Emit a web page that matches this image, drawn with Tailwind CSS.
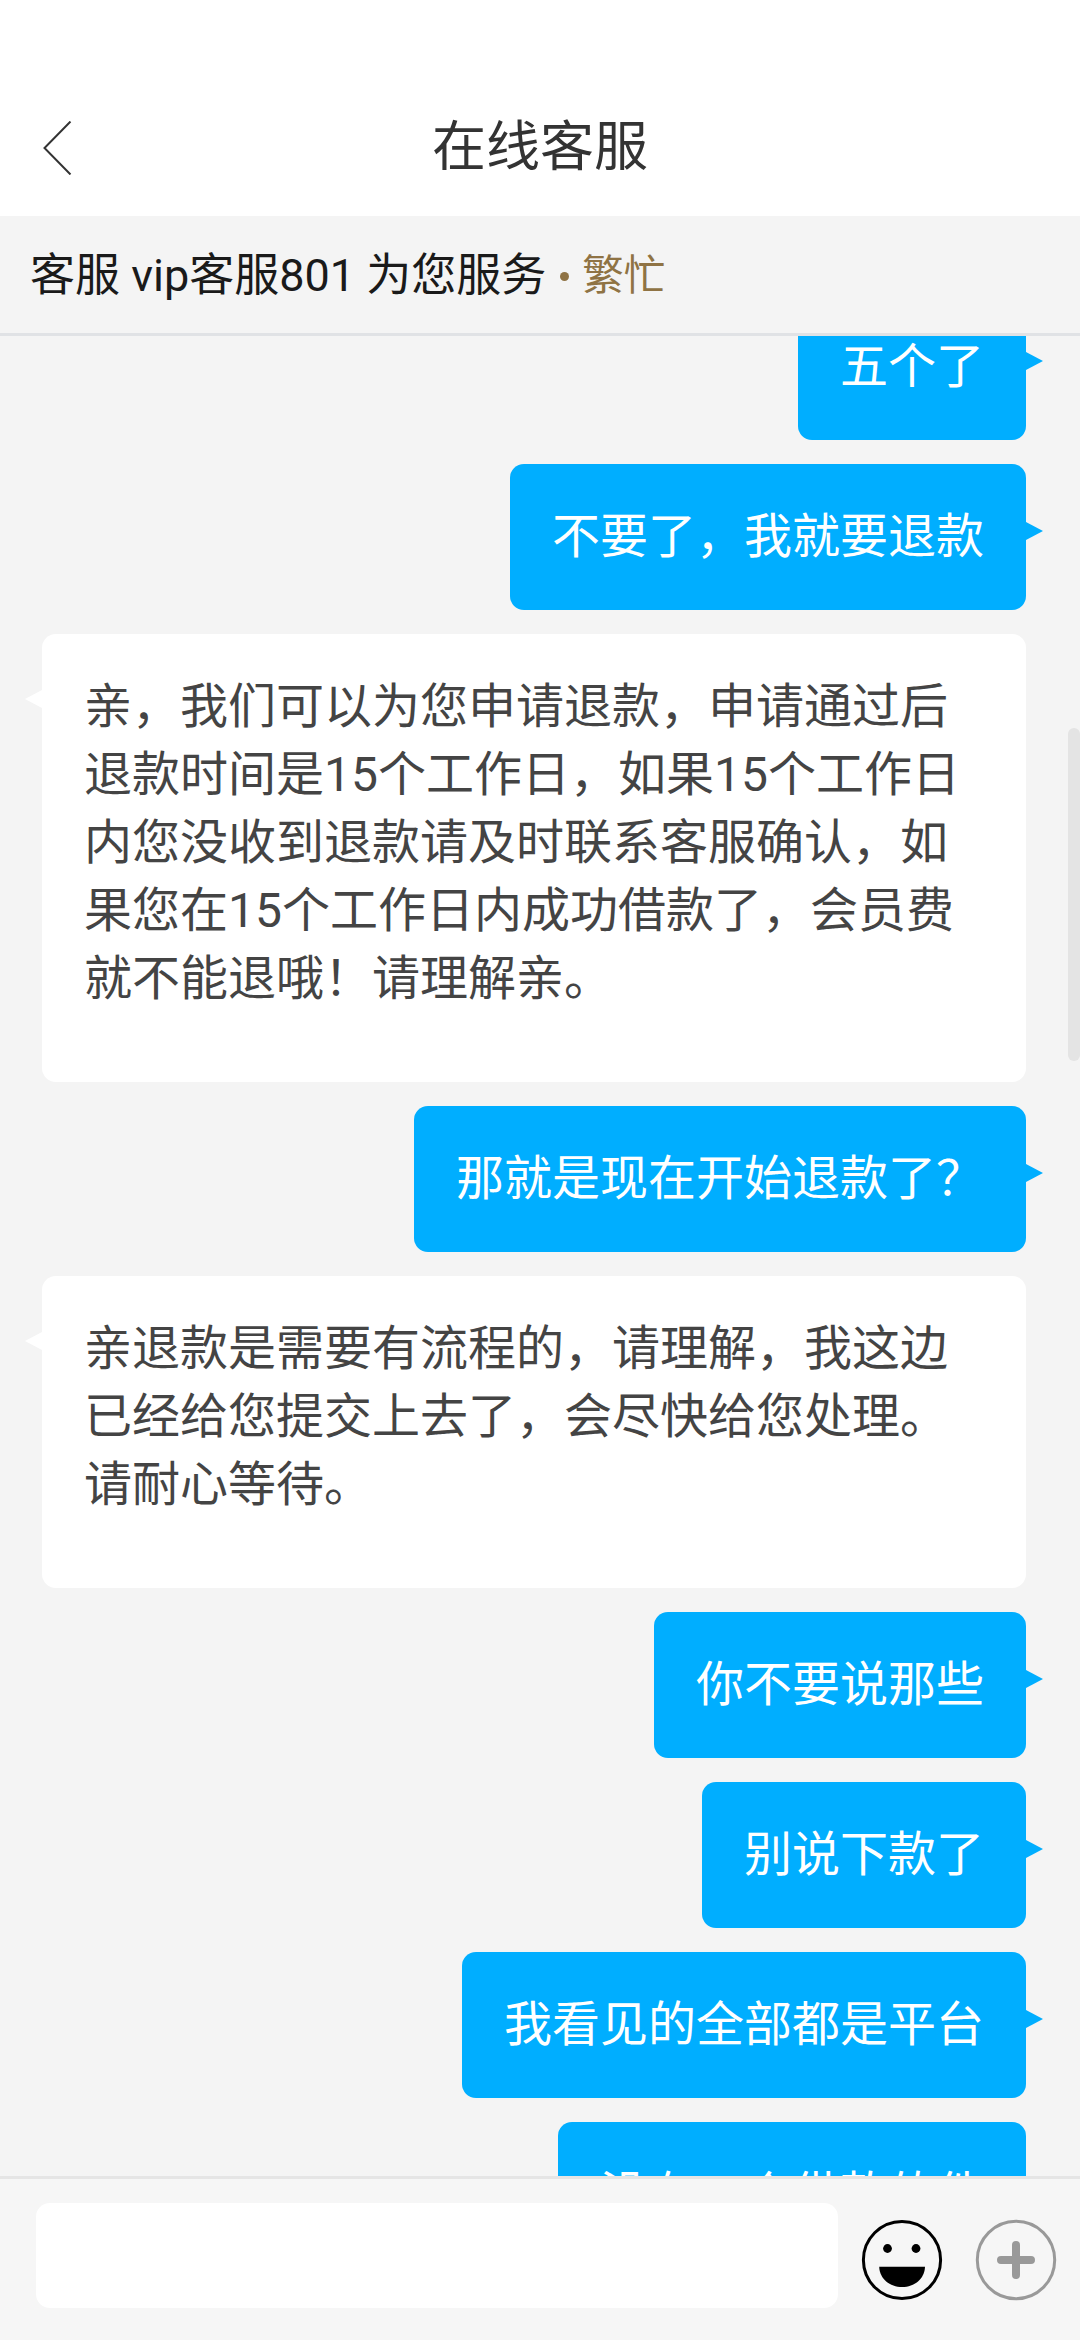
<!DOCTYPE html>
<html lang="zh-CN">
<head>
<meta charset="utf-8">
<title>在线客服</title>
<script src="https://cdn.jsdelivr.net/npm/@tailwindcss/browser@4"></script>
</head>
<body class="flex h-[2340px] w-[1080px] flex-col overflow-hidden bg-[#f4f4f4] font-[Roboto,'Noto_Sans_CJK_SC',sans-serif]">
  <header class="grid h-[216px] shrink-0 grid-cols-[1fr_auto_1fr] items-center bg-white px-[42px] pt-[76px]">
    <svg class="mt-[3px] h-[54px] w-[30px]" viewBox="0 0 30 54" fill="none" stroke="#333" stroke-width="2"><path d="M28.5 .5 2.5 27 28.5 53.5"/></svg>
    <h1 class="pt-1 text-[54px] leading-[80px] text-[#333]">在线客服</h1>
  </header>

  <div class="flex h-[120px] shrink-0 items-center border-b-3 border-[#e0e2e5] bg-[#f4f4f4] pt-[3px] pl-[30px] text-[45px] whitespace-pre text-[#1a1a1a]">
    <span>客服 vip客服801 为您服务</span>
    <span class="ml-[14px] size-[9px] rounded-full bg-[#8f7344]"></span>
    <span class="ml-[13px] text-[41.5px] text-[#8f7344]">繁忙</span>
  </div>

  <main class="relative min-h-0 flex-1 overflow-hidden">
    <div class="-mt-[42px] flex flex-col items-end gap-6 pr-[54px] pl-[42px] text-[48px] leading-[68px] text-white">
      <div class="relative shrink-0 rounded-[14px] bg-[#00aeff] px-[42px] py-[39px]">五个了<i class="absolute top-[58px] left-full h-[18px] w-[17px] bg-[#00aeff] [clip-path:polygon(0_0,100%_50%,0_100%)]"></i></div>
      <div class="relative shrink-0 rounded-[14px] bg-[#00aeff] px-[42px] py-[39px]">不要了，我就要退款<i class="absolute top-[58px] left-full h-[18px] w-[17px] bg-[#00aeff] [clip-path:polygon(0_0,100%_50%,0_100%)]"></i></div>
      <div class="relative w-full shrink-0 rounded-[14px] bg-white px-[42px] pt-[39px] pb-[69px] whitespace-nowrap text-[#444]">亲，我们可以为您申请退款，申请通过后<br>退款时间是15个工作日，如果15个工作日<br>内您没收到退款请及时联系客服确认，如<br>果您在15个工作日内成功借款了，会员费<br>就不能退哦！请理解亲。<i class="absolute top-[56px] right-full h-[18px] w-[17px] bg-white [clip-path:polygon(100%_0,0_50%,100%_100%)]"></i></div>
      <div class="relative shrink-0 rounded-[14px] bg-[#00aeff] px-[42px] py-[39px]">那就是现在开始退款了？<i class="absolute top-[58px] left-full h-[18px] w-[17px] bg-[#00aeff] [clip-path:polygon(0_0,100%_50%,0_100%)]"></i></div>
      <div class="relative w-full shrink-0 rounded-[14px] bg-white px-[42px] pt-[39px] pb-[69px] whitespace-nowrap text-[#444]">亲退款是需要有流程的，请理解，我这边<br>已经给您提交上去了，会尽快给您处理。<br>请耐心等待。<i class="absolute top-[56px] right-full h-[18px] w-[17px] bg-white [clip-path:polygon(100%_0,0_50%,100%_100%)]"></i></div>
      <div class="relative shrink-0 rounded-[14px] bg-[#00aeff] px-[42px] py-[39px]">你不要说那些<i class="absolute top-[58px] left-full h-[18px] w-[17px] bg-[#00aeff] [clip-path:polygon(0_0,100%_50%,0_100%)]"></i></div>
      <div class="relative shrink-0 rounded-[14px] bg-[#00aeff] px-[42px] py-[39px]">别说下款了<i class="absolute top-[58px] left-full h-[18px] w-[17px] bg-[#00aeff] [clip-path:polygon(0_0,100%_50%,0_100%)]"></i></div>
      <div class="relative shrink-0 rounded-[14px] bg-[#00aeff] px-[42px] py-[39px]">我看见的全部都是平台<i class="absolute top-[58px] left-full h-[18px] w-[17px] bg-[#00aeff] [clip-path:polygon(0_0,100%_50%,0_100%)]"></i></div>
      <div class="relative shrink-0 rounded-[14px] bg-[#00aeff] px-[42px] py-[39px]">没有一个借款软件<i class="absolute top-[58px] left-full h-[18px] w-[17px] bg-[#00aeff] [clip-path:polygon(0_0,100%_50%,0_100%)]"></i></div>
    </div>
    <!-- scrollbar thumb -->
    <div class="absolute top-[392px] right-0 h-[333px] w-3 rounded-full bg-[#e4e4e4]"></div>
  </main>

  <footer class="flex h-[164px] shrink-0 items-start border-t-3 border-[#e5e5e5] bg-[#f6f6f6] pt-6 pl-9">
    <div class="h-[105px] w-[802px] rounded-[14px] bg-white"></div>
    <svg class="mt-4 ml-[22.5px] size-[82px] shrink-0" viewBox="0 0 82 82"><circle cx="41" cy="41" r="38.6" fill="none" stroke="#000" stroke-width="3"/><circle cx="26.5" cy="29.5" r="4.4"/><circle cx="55" cy="29.5" r="4.4"/><path d="M18.2 47.7H64C63.5 60 53.5 68 41.1 68S18.7 60 18.2 47.7Z"/></svg>
    <svg class="mt-4 ml-8 size-[82px] shrink-0" viewBox="0 0 82 82" fill="none" stroke="#999"><circle cx="41" cy="41" r="38.7" stroke-width="3"/><path d="M26 41H56M41 26V56" stroke-width="8" stroke-linecap="round"/></svg>
  </footer>
</body>
</html>
